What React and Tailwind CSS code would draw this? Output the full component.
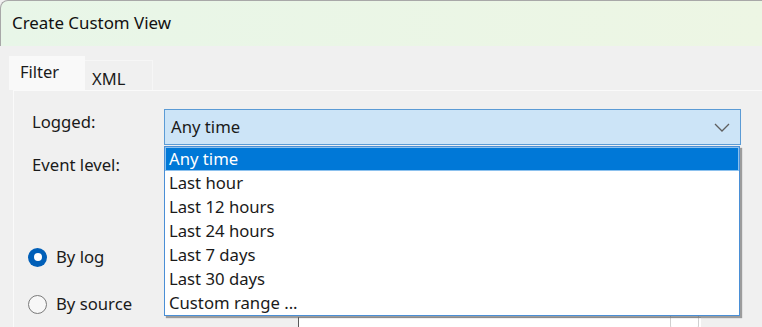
import { useState } from "react";

const options = [
    "Any time",
    "Last hour",
    "Last 12 hours",
    "Last 24 hours",
    "Last 7 days",
    "Last 30 days",
    "Custom range ...",
];

function Chevron() {
    return (
        <svg width="16" height="9" viewBox="0 0 16 9" className="text-[#5f5f5f]">
            <path d="M1 1 L8 8 L15 1" fill="none" stroke="currentColor" strokeWidth="1.3" />
        </svg>
    );
}

function Radio({ checked }) {
    return checked ? (
        <span className="flex h-[19px] w-[19px] items-center justify-center rounded-full bg-[#005fb8]">
            <span className="h-[8px] w-[8px] rounded-full bg-white" />
        </span>
    ) : (
        <span className="h-[19px] w-[19px] rounded-full border border-[#7a7a7a] bg-[#f7f7f7]" />
    );
}

export default function App() {
    const [selected, setSelected] = useState(0);
    const [mode, setMode] = useState("log");

    return (
        <div className="h-[327px] w-[762px] overflow-hidden bg-[#f0f0f0] font-['Noto_Sans',sans-serif] text-[16.7px] leading-[20px] text-[#1a1a1a]">
            {/* title bar */}
            <div className="flex h-[46px] items-center rounded-tl-[8px] border-t border-l border-[#a8a8a8] bg-gradient-to-r from-[#e8f6e8] to-[#edf6e4] pl-[11px] pb-[2px]">
                <span className="text-[16.9px] text-[#111]">Create Custom View</span>
            </div>

            {/* tabs */}
            <div className="flex items-end pl-[9px] pt-[10px]">
                <div className="flex h-[34px] w-[76px] items-start bg-[#f9f9f9] pl-[11px] pt-[6px] text-[16.5px]">Filter</div>
                <div className="flex h-[30px] w-[68px] items-start border-t border-r border-[#f6f6f6] pl-[7px] pt-[8px] text-[16.5px]">XML</div>
            </div>

            {/* tab panel */}
            <div className="ml-[13px] h-[300px] border-t border-l border-[#fafafa] pl-[18px] pt-[18px]">
                <div className="flex items-start">
                    <span className="w-[132px] pt-[3px]">Logged:</span>
                    <div className="relative w-[577px]">
                        <div className="flex h-[36px] items-center justify-between border border-[#5b9bd5] bg-[#cce4f7] pl-[6px] pr-[10px]">
                            <span>{options[selected]}</span>
                            <Chevron />
                        </div>
                        <ul className="absolute left-0 top-[37px] z-10 w-[576px] border border-[#4a8fd6] bg-white shadow-[2px_2px_1px_rgba(0,0,0,0.35)]">
                            {options.map((o, i) => (
                                <li
                                    key={o}
                                    onClick={() => setSelected(i)}
                                    className={
                                        i === 0
                                            ? "flex h-[24px] items-center border border-[#8cc1ee] bg-[#0078d7] pl-[3px] text-white"
                                            : "flex h-[24px] items-center pl-[4px]"
                                    }
                                >
                                    {o}
                                </li>
                            ))}
                        </ul>
                    </div>
                </div>

                <div className="mt-[10px] h-[20px]">Event level:</div>

                <div className="ml-[-4px] mt-[72px] flex items-center gap-[9px]" onClick={() => setMode("log")}>
                    <Radio checked={mode === "log"} />
                    <span>By log</span>
                </div>

                <div className="ml-[-4px] mt-[27px] flex items-center gap-[9px]" onClick={() => setMode("source")}>
                    <Radio checked={mode === "source"} />
                    <span>By source</span>
                </div>

                <div className="ml-[266px] mt-[3px] flex h-[12px] w-[403px] justify-end border-t border-l border-t-[#d8d8d8] border-l-[#5a5a5a] bg-white">
                    <div className="mr-[2px] mt-[-5px] h-[16px] w-[29px] rounded-[3px] border border-[#d0d0d0]" />
                </div>
            </div>
        </div>
    );
}
